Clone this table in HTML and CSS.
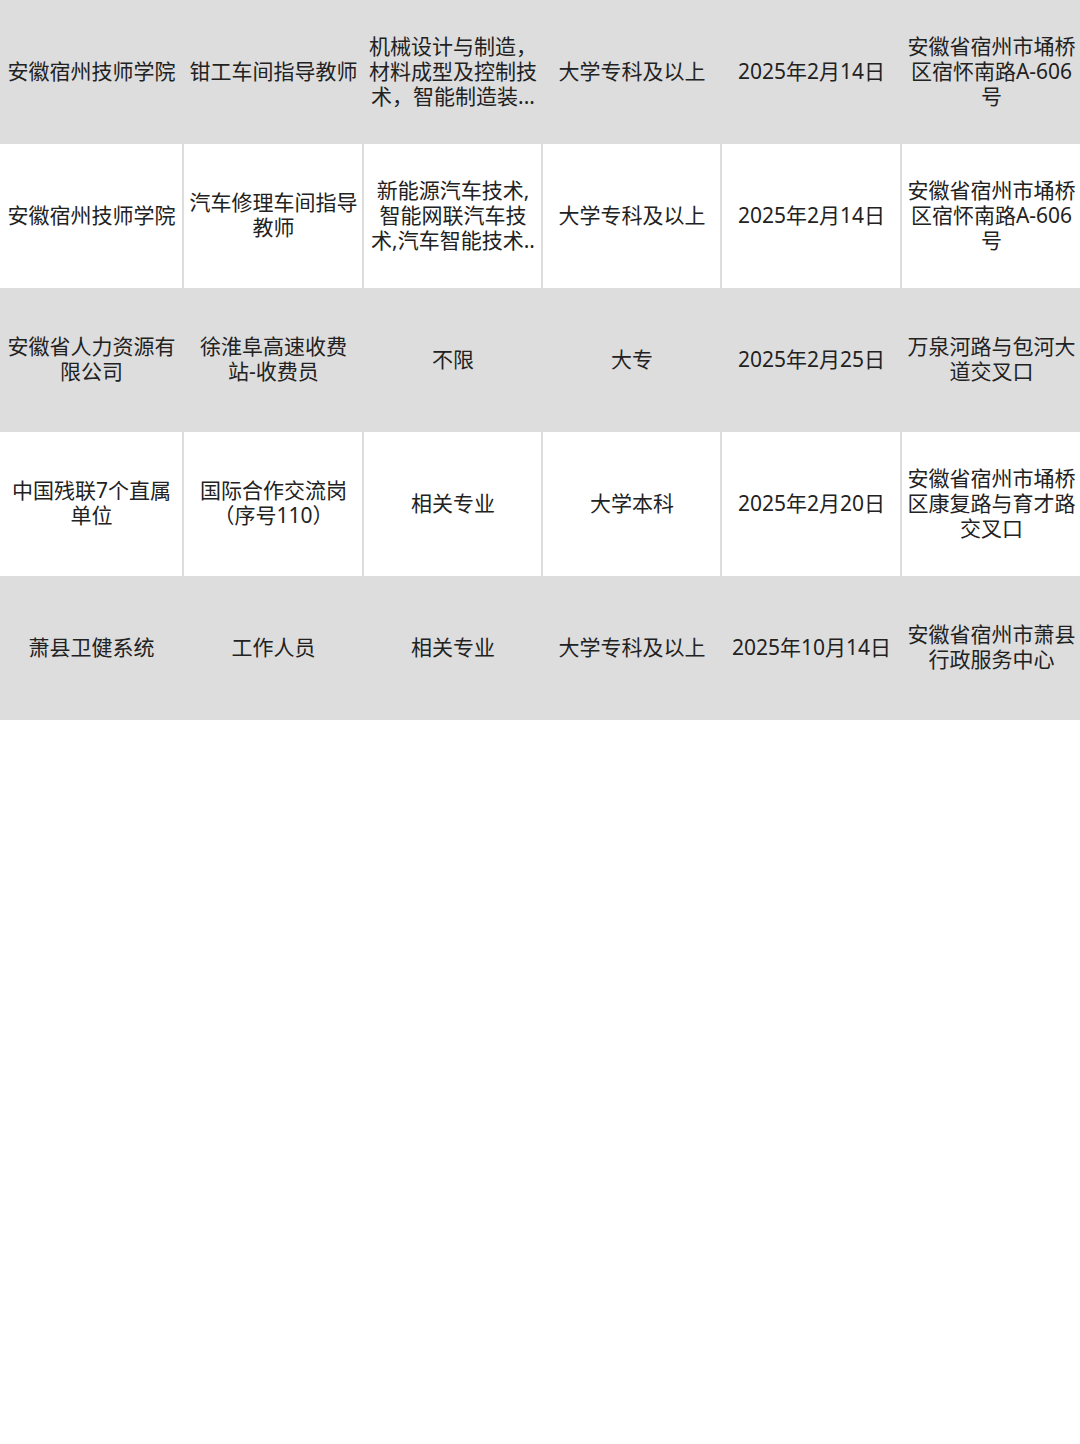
FILE: index.html
```html
<!DOCTYPE html>
<html lang="zh-CN">
<head>
<meta charset="utf-8">
<title>岗位列表</title>
<link rel="stylesheet" href="styles.css">
</head>
<body>
<div class="table">
  <div class="row shaded">
    <div class="cell"><span class="txt">安徽宿州技师学院</span></div>
    <div class="cell"><span class="txt">钳工车间指导教师</span></div>
    <div class="cell"><span class="txt">机械设计与制造，材料成型及控制技术，智能制造装...</span></div>
    <div class="cell"><span class="txt">大学专科及以上</span></div>
    <div class="cell"><span class="txt">2025年2月14日</span></div>
    <div class="cell"><span class="txt">安徽省宿州市埇桥区宿怀南路A-606号</span></div>
  </div>
  <div class="row">
    <div class="cell"><span class="txt">安徽宿州技师学院</span></div>
    <div class="cell"><span class="txt">汽车修理车间指导教师</span></div>
    <div class="cell"><span class="txt">新能源汽车技术,智能网联汽车技术,汽车智能技术..</span></div>
    <div class="cell"><span class="txt">大学专科及以上</span></div>
    <div class="cell"><span class="txt">2025年2月14日</span></div>
    <div class="cell"><span class="txt">安徽省宿州市埇桥区宿怀南路A-606号</span></div>
  </div>
  <div class="row shaded">
    <div class="cell"><span class="txt">安徽省人力资源有限公司</span></div>
    <div class="cell"><span class="txt">徐淮阜高速收费站-收费员</span></div>
    <div class="cell"><span class="txt">不限</span></div>
    <div class="cell"><span class="txt">大专</span></div>
    <div class="cell"><span class="txt">2025年2月25日</span></div>
    <div class="cell"><span class="txt">万泉河路与包河大道交叉口</span></div>
  </div>
  <div class="row">
    <div class="cell"><span class="txt">中国残联7个直属单位</span></div>
    <div class="cell"><span class="txt">国际合作交流岗（序号110）</span></div>
    <div class="cell"><span class="txt">相关专业</span></div>
    <div class="cell"><span class="txt">大学本科</span></div>
    <div class="cell"><span class="txt">2025年2月20日</span></div>
    <div class="cell"><span class="txt">安徽省宿州市埇桥区康复路与育才路交叉口</span></div>
  </div>
  <div class="row shaded">
    <div class="cell"><span class="txt">萧县卫健系统</span></div>
    <div class="cell"><span class="txt">工作人员</span></div>
    <div class="cell"><span class="txt">相关专业</span></div>
    <div class="cell"><span class="txt">大学专科及以上</span></div>
    <div class="cell"><span class="txt">2025年10月14日</span></div>
    <div class="cell"><span class="txt">安徽省宿州市萧县行政服务中心</span></div>
  </div>
</div>
</body>
</html>
```

FILE: styles.css
```css
html, body {
  margin: 0;
  padding: 0;
  background: #ffffff;
}

body {
  font-family: "Noto Sans", "Noto Sans CJK SC", sans-serif;
  color: #222222;
  font-size: 21px;
  line-height: 25px;
}

.table {
  width: 1080px;
  display: flex;
  flex-direction: column;
}

.row {
  display: grid;
  grid-template-columns: 182px 178px 177px 177px 178px 178px;
  column-gap: 2px;
  height: 144px;
  background: #dddddd;
}

.cell {
  display: flex;
  align-items: center;
  justify-content: center;
  padding: 0 4px 2px 5px;
  background: #ffffff;
  text-align: center;
}

.row.shaded .cell {
  background: #dddddd;
}

.txt {
  display: block;
  word-break: break-all;
}
```
